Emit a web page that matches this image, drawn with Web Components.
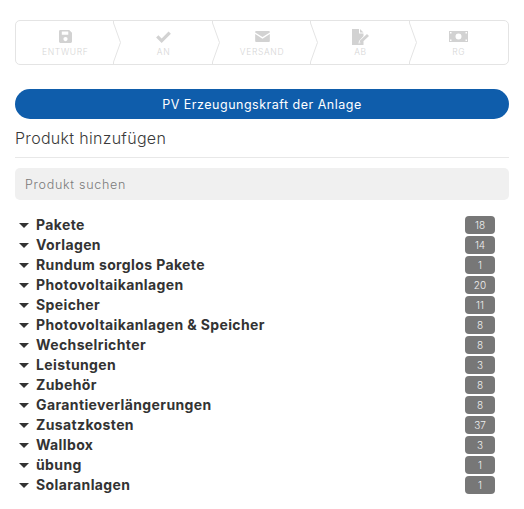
<!DOCTYPE html>
<html lang="de"><head><meta charset="utf-8"><title>Produkt</title>
<style>
html,body{margin:0;background:#fff}
body{font-family:Inter,"Noto Sans",sans-serif;color:#333}
app-panel{display:block}
</style></head><body>
<app-panel>
<step-bar>
<step-item label="ENTWURF" icon="save"></step-item>
<step-item label="AN" icon="check"></step-item>
<step-item label="VERSAND" icon="mail"></step-item>
<step-item label="AB" icon="sign"></step-item>
<step-item label="RG" icon="money" last></step-item>
</step-bar>
<pill-button>PV Erzeugungskraft der Anlage</pill-button>
<section-title>Produkt hinzufügen</section-title>
<search-box placeholder="Produkt suchen"></search-box>
<product-list>
<product-row count="18">Pakete</product-row>
<product-row count="14">Vorlagen</product-row>
<product-row count="1">Rundum sorglos Pakete</product-row>
<product-row count="20">Photovoltaikanlagen</product-row>
<product-row count="11">Speicher</product-row>
<product-row count="8">Photovoltaikanlagen &amp; Speicher</product-row>
<product-row count="8">Wechselrichter</product-row>
<product-row count="3">Leistungen</product-row>
<product-row count="8">Zubehör</product-row>
<product-row count="8">Garantieverlängerungen</product-row>
<product-row count="37">Zusatzkosten</product-row>
<product-row count="3">Wallbox</product-row>
<product-row count="1">übung</product-row>
<product-row count="1">Solaranlagen</product-row>
</product-list>
</app-panel>
<script>
const ICONS={
save:'<svg width="13" height="13" viewBox="0 0 14 14"><path fill="#d2d2d2" fill-rule="evenodd" d="M1.5 0H11l3 3v9.500A1.500 1.500 0 0 1 12.500 14h-11A1.500 1.500 0 0 1 0 12.500v-11A1.500 1.500 0 0 1 1.500 0ZM3 1.500V5h7V1.500ZM7 7.500a2.300 2.300 0 1 0 0 4.600a2.300 2.300 0 0 0 0-4.600Z"/></svg>',
check:'<svg width="15" height="12" viewBox="0 0 16 13"><path fill="#d2d2d2" d="M0 7l2.500-2.500L6 8l7.500-7.500L16 3 6 13Z"/></svg>',
mail:'<svg width="15" height="11" viewBox="0 0 16 12"><path fill="#d2d2d2" d="M1 0h14a1 1 0 0 1 1 1v.6L8 6.500 0 1.600V1a1 1 0 0 1 1-1ZM0 3.300 8 8.500l8-5.200V11a1 1 0 0 1-1 1H1a1 1 0 0 1-1-1Z"/></svg>',
sign:'<svg width="17" height="16" viewBox="0 0 17 16"><path fill="#d2d2d2" d="M0 0h7v4.500h4.500V7L7 12l-.5 2.500L9 14l2.500-2.500V16H0ZM8 0l3.500 3.500H8ZM15 5l2 2-7 6.500-2.500.500.500-2.500Z"/></svg>',
money:'<svg width="19" height="11" viewBox="0 0 19 11"><path fill="#d2d2d2" fill-rule="evenodd" d="M0 0h19v11H0ZM9.500 2.500a3 3 0 1 0 0 6a3 3 0 0 0 0-6ZM1 1v1.500h1.500V1ZM16.500 1v1.500H18V1ZM1 8.500V10h1.500V8.500ZM16.500 8.500V10H18V8.500Z"/></svg>'
};
function def(name,css,html){
  customElements.define(name,class extends HTMLElement{
    constructor(){super();this.attachShadow({mode:'open'});}
    connectedCallback(){
      this.shadowRoot.innerHTML='<style>'+css+'</style>'+(typeof html==='function'?html(this):html);
    }
  });
}
def('step-bar',`:host{display:flex;margin:20px 15px 0;height:45px;box-sizing:border-box;border:1px solid #e4e4e4;border-radius:5px;overflow:hidden}`,'<slot></slot>');
def('step-item',`:host{position:relative;flex:1 1 0;display:flex;flex-direction:column;align-items:center;min-width:0}
.i{height:19px;margin-top:6px;display:flex;align-items:center;justify-content:center}
.t{font-size:8.500px;line-height:10px;margin-top:1px;color:#d6d6d6;font-weight:300;letter-spacing:.65px;white-space:nowrap}
svg.c{position:absolute;right:-8px;top:-1px;width:9px;height:45px;z-index:1}`,
 e=>`<div class="i">${ICONS[e.getAttribute('icon')]}</div><div class="t">${e.getAttribute('label')}</div>`+
 (e.hasAttribute('last')?'':'<svg class="c" viewBox="0 0 9 45"><path fill="#fff" d="M0 0 8 22.500 0 45Z"/><path fill="none" stroke="#e4e4e4" d="M.5 0V3L7.500 22.500 .5 42V45"/></svg>'));
def('pill-button',`:host{display:flex;align-items:center;justify-content:center;margin:24px 15px 0;height:30px;border-radius:15px;background:#0f5dab;color:#fff;font-size:12.500px;font-weight:400;letter-spacing:.5px}`,'<slot></slot>');
def('section-title',`:host{display:block;margin:9px 15px 0;height:29px;line-height:21px;font-size:16px;font-weight:300;color:#3a3a3a;border-bottom:1px solid #e8e8e8;letter-spacing:.3px}`,'<slot></slot>');
def('search-box',`:host{display:block;margin:10px 15px 0;height:32px}
input{display:block;box-sizing:border-box;width:100%;height:100%;border:0;border-radius:5px;background:#f0f0f0;padding:0 10px;font:300 12.500px Inter,"Noto Sans",sans-serif;letter-spacing:.72px;outline:0}
input::placeholder{color:#7a7a7a;opacity:1}`,e=>`<input placeholder="${e.getAttribute('placeholder')}">`);
def('product-list',`:host{display:block;margin:15px 29px 0 19px}`,'<slot></slot>');
def('product-row',`:host{display:flex;align-items:center;height:20px;font-size:14px;font-weight:700;color:#333;letter-spacing:.38px}
.c{width:0;height:0;border:5px solid transparent;border-top-color:#333;border-bottom:0;margin-right:7px}
.l{flex:1;white-space:nowrap;line-height:20px}
.b{width:30px;height:18px;border-radius:4px;background:#777;color:#f0f0f0;font-size:10px;font-weight:300;letter-spacing:0;display:flex;align-items:center;justify-content:center}`,
 e=>`<span class="c"></span><span class="l"><slot></slot></span><span class="b">${e.getAttribute('count')}</span>`);
def('app-panel',':host{display:block}','<slot></slot>');
</script>
</body></html>
